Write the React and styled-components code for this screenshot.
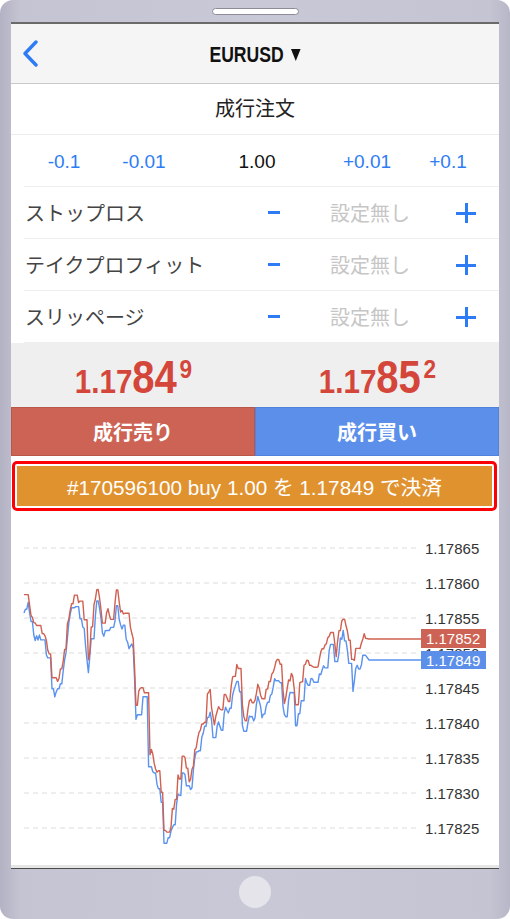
import React from "react";
import styled, { createGlobalStyle } from "styled-components";

const BLUE = "#2d7cf6";
const JP = `"Liberation Sans", "Noto Sans CJK JP", sans-serif`;

const GlobalStyle = createGlobalStyle`
  *, *::before, *::after { box-sizing: border-box; }
  html, body { margin: 0; padding: 0; background: #ffffff; }
  body { font-family: ${JP}; }
`;

// device frame
const Device = styled.div`
  width: 510px;
  height: 919px;
  border-radius: 13px;
  padding: 0 11px;
  display: flex;
  flex-direction: column;
  overflow: hidden;
  background: linear-gradient(
    to right,
    #b3b2c4 0%,
    #c5c4d2 4%,
    #c9c8d6 50%,
    #c5c4d2 96%,
    #b8b7c8 100%
  );
`;

const TopBezel = styled.div`
  height: 22px;
  display: flex;
  justify-content: center;
`;

const Speaker = styled.div`
  margin-top: 8px;
  width: 87px;
  height: 7px;
  border-radius: 4px;
  background: #ffffff;
  border: 1px solid #8d8c98;
`;

const Screen = styled.div`
  height: 847px;
  display: flex;
  flex-direction: column;
  background: #ffffff;
  border-top: 2px solid #6a6a6a;
  border-bottom: 1px solid #4d4d4d;
`;

const BottomBezel = styled.div`
  flex: 1;
  display: flex;
  justify-content: center;
  padding-top: 7px;
`;

const HomeButton = styled.div`
  width: 32px;
  height: 32px;
  border-radius: 50%;
  background: #e4e4ea;
`;

// nav
const NavBar = styled.div`
  height: 60px;
  display: grid;
  grid-template-columns: 60px 1fr 60px;
  align-items: center;
  background: #f5f5f5;
  border-bottom: 1px solid #c9c9c9;
`;

const BackButton = styled.div`
  padding-left: 11px;
  display: flex;
`;

const TitleGroup = styled.div`
  justify-self: center;
  display: flex;
  align-items: center;
  padding-top: 3px;
  transform: scaleX(0.8);
  font: 700 22px "Liberation Sans", sans-serif;
  color: #111;
`;

const Caret = styled.span`
  margin-left: 9px;
  width: 0;
  height: 0;
  border-left: 6px solid transparent;
  border-right: 6px solid transparent;
  border-top: 12px solid #111;
`;

const SectionTitle = styled.div`
  height: 51px;
  display: flex;
  align-items: center;
  justify-content: center;
  padding-bottom: 3px;
  font-size: 20px;
  color: #222;
  border-bottom: 1px solid #ececec;
`;

const LotRow = styled.div`
  height: 52px;
  margin-left: 13px;
  padding-top: 3px;
  display: grid;
  grid-template-columns: 80px 80px 146px 74px 88px;
  align-items: center;
  justify-items: center;
  border-bottom: 1px solid #efefef;
  font-size: 19px;
`;

const LotStep = styled.span`
  color: ${(p) => (p.$value ? "#111" : BLUE)};
`;

const SettingRow = styled.div`
  height: 52px;
  margin-left: 13px;
  display: grid;
  grid-template-columns: 227px 46px 146px 46px 1fr;
  align-items: center;
  justify-items: center;
  border-bottom: 1px solid #efefef;
  &:last-child {
    border-bottom: none;
  }
`;

const SettingLabel = styled.span`
  justify-self: start;
  padding-left: 1px;
  font-size: 20px;
  color: #444;
`;

const SettingValue = styled.span`
  font-size: 20px;
  color: #c6c6c6;
`;

const Minus = styled.span`
  width: 12px;
  height: 3px;
  background: ${BLUE};
`;

const Plus = styled.span`
  position: relative;
  width: 20px;
  height: 20px;
  &::before,
  &::after {
    content: "";
    position: absolute;
    background: ${BLUE};
  }
  &::before {
    left: 0;
    right: 0;
    top: 9px;
    height: 3px;
  }
  &::after {
    top: 0;
    bottom: 0;
    left: 9px;
    width: 3px;
  }
`;

// prices
const PriceBar = styled.div`
  height: 64px;
  display: grid;
  grid-template-columns: 1fr 1fr;
  align-items: center;
  justify-items: center;
  background: #efefef;
  padding-top: 4px;
`;

const Price = styled.div`
  display: inline-flex;
  align-items: baseline;
  transform: scaleX(0.87);
  font-family: "Liberation Sans", sans-serif;
  font-weight: 700;
  line-height: 1;
  color: #d5463a;
`;

const PriceHead = styled.span`
  font-size: 34px;
`;

const PriceBig = styled.span`
  font-size: 46px;
`;

const PriceSup = styled.span`
  align-self: flex-start;
  margin-top: 2px;
  margin-left: 3px;
  font-size: 26px;
`;

const TradeRow = styled.div`
  height: 49px;
  display: grid;
  grid-template-columns: 1fr 1fr;
`;

const TradeButton = styled.div`
  display: flex;
  align-items: center;
  justify-content: center;
  font-size: 20px;
  font-weight: 700;
  color: #fff;
  background: ${(p) => (p.$side === "sell" ? "#cd6354" : "#5b8fea")};
  border: 1px solid ${(p) => (p.$side === "sell" ? "#b95749" : "#4f83dc")};
`;

const CloseWrap = styled.div`
  height: 59px;
  padding: 5px 2px 4px 1px;
`;

const CloseFrame = styled.div`
  height: 50px;
  padding: 2px;
  border: 3px solid #fb0007;
  border-radius: 5px;
  background: #fff;
`;

const CloseButton = styled.div`
  height: 40px;
  display: flex;
  align-items: center;
  justify-content: center;
  background: #e0922f;
  color: #fff;
  font-size: 20.7px;
`;

const ChartBox = styled.div`
  flex: 1;
  background: #fff;
`;

const ChartFoot = styled.div`
  height: 3px;
  background: #e6e6e6;
`;

// chart data (absolute page coords of the bid line, traced from the screen)
const BID_KEYS = [
  [24, 610], [28, 602], [32, 633], [36, 640], [40, 635], [44, 650], [48, 660],
  [54, 703], [58, 690], [62, 680], [66, 650], [70, 612], [75, 608], [80, 618],
  [84, 628], [88, 675], [92, 632], [97, 603], [100, 610], [103, 640], [108, 625],
  [113, 635], [117, 603], [120, 625], [125, 630], [128, 645], [133, 645],
  [136, 717], [140, 705], [143, 700], [148, 767], [152, 767], [157, 787],
  [160, 787], [165, 855], [170, 833], [175, 820], [178, 793], [181, 793],
  [183, 757], [186, 780], [189, 802], [192, 785], [196, 752], [200, 752],
  [205, 720], [210, 707], [214, 743], [218, 725], [222, 730], [225, 703],
  [229, 717], [233, 693], [236, 682], [240, 693], [243, 730], [246, 745],
  [249, 717], [255, 717], [258, 697], [262, 717], [266, 710], [270, 700],
  [275, 680], [280, 680], [285, 723], [289, 697], [293, 693], [296, 730],
  [300, 703], [305, 682], [312, 682], [318, 682], [322, 667], [326, 663],
  [330, 650], [333, 640], [336, 673], [340, 643], [343, 633], [347, 650],
  [350, 667], [353, 690], [356, 667], [360, 667], [363, 655], [366, 658],
];

const OX = 11;
const OY = 515;

function keyAt(x) {
  for (let i = 1; i < BID_KEYS.length; i++) {
    const [x1, y1] = BID_KEYS[i];
    if (x <= x1) {
      const [x0, y0] = BID_KEYS[i - 1];
      return y0 + ((y1 - y0) * (x - x0)) / (x1 - x0);
    }
  }
  return BID_KEYS[BID_KEYS.length - 1][1];
}

function makeRandom(seed) {
  let s = seed;
  return () => {
    s = (s * 16807) % 2147483647;
    return (s - 1) / 2147483646;
  };
}

function buildLines() {
  const rand = makeRandom(20170919);
  const bid = [];
  const ask = [];
  let lastB = null;
  let lastA = null;
  for (let x = 24; x <= 366; x += 1.4) {
    const base = keyAt(x);
    let b = base + (rand() - 0.5) * 8;
    if (lastB !== null && rand() < 0.3) b = lastB;
    const spread = 12 + (7 * (x - 24)) / 342;
    let a = base - spread + (rand() - 0.5) * 8;
    if (lastA !== null && rand() < 0.3) a = lastA;
    if (a > b - 4) a = b - 4;
    bid.push([x, b]);
    ask.push([x, a]);
    lastB = b;
    lastA = a;
  }
  bid.push([369, 660], [421, 660]);
  ask.push([369, 639], [421, 639]);
  const toPath = (pts) =>
    pts.map(([x, y]) => `${(x - OX).toFixed(1)},${(y - OY).toFixed(1)}`).join(" ");
  return { bid: toPath(bid), ask: toPath(ask) };
}

const LEVELS = ["1.17865", "1.17860", "1.17855", "1.17850", "1.17845", "1.17840", "1.17835", "1.17830", "1.17825"];

function PriceChart() {
  const lines = React.useMemo(buildLines, []);
  return (
    <svg width="488" height="350" style={{ display: "block" }}>
      {LEVELS.map((label, i) => {
        const y = 33 + i * 35;
        return (
          <g key={label}>
            <line x1="13" x2="407" y1={y} y2={y} stroke="#dcdcdc" strokeWidth="1" strokeDasharray="5 4" />
            <text x="414" y={y} dy="5.5" fontSize="15" fill="#333" fontFamily="Liberation Sans, sans-serif">
              {label}
            </text>
          </g>
        );
      })}
      <polyline points={lines.bid} fill="none" stroke="#5a92ef" strokeWidth="1.4" strokeLinejoin="round" />
      <polyline points={lines.ask} fill="none" stroke="#d0604f" strokeWidth="1.4" strokeLinejoin="round" />
      <rect x="410" y="114" width="65" height="19" fill="#cd6354" />
      <text x="415" y="123.5" dy="5.5" fontSize="15" fill="#fff" fontFamily="Liberation Sans, sans-serif">
        1.17852
      </text>
      <rect x="410" y="136" width="65" height="18" fill="#5b8fea" />
      <text x="415" y="145" dy="5.5" fontSize="15" fill="#fff" fontFamily="Liberation Sans, sans-serif">
        1.17849
      </text>
    </svg>
  );
}

const SETTINGS = ["ストップロス", "テイクプロフィット", "スリッページ"];

export default function App() {
  return (
    <>
      <GlobalStyle />
      <Device>
        <TopBezel>
          <Speaker />
        </TopBezel>
        <Screen>
          <NavBar>
            <BackButton>
              <svg width="17" height="27" viewBox="0 0 17 27">
                <polyline points="14,2 3,13.5 14,25" fill="none" stroke={BLUE} strokeWidth="3.4" strokeLinecap="round" strokeLinejoin="round" />
              </svg>
            </BackButton>
            <TitleGroup>
              EURUSD
              <Caret />
            </TitleGroup>
            <span />
          </NavBar>
          <SectionTitle>成行注文</SectionTitle>
          <LotRow>
            <LotStep>-0.1</LotStep>
            <LotStep>-0.01</LotStep>
            <LotStep $value>1.00</LotStep>
            <LotStep>+0.01</LotStep>
            <LotStep>+0.1</LotStep>
          </LotRow>
          {SETTINGS.map((label) => (
            <SettingRow key={label}>
              <SettingLabel>{label}</SettingLabel>
              <Minus />
              <SettingValue>設定無し</SettingValue>
              <Plus />
            </SettingRow>
          ))}
          <PriceBar>
            <Price>
              <PriceHead>1.17</PriceHead>
              <PriceBig>84</PriceBig>
              <PriceSup>9</PriceSup>
            </Price>
            <Price>
              <PriceHead>1.17</PriceHead>
              <PriceBig>85</PriceBig>
              <PriceSup>2</PriceSup>
            </Price>
          </PriceBar>
          <TradeRow>
            <TradeButton $side="sell">成行売り</TradeButton>
            <TradeButton $side="buy">成行買い</TradeButton>
          </TradeRow>
          <CloseWrap>
            <CloseFrame>
              <CloseButton>#170596100 buy 1.00 を 1.17849 で決済</CloseButton>
            </CloseFrame>
          </CloseWrap>
          <ChartBox>
            <PriceChart />
          </ChartBox>
          <ChartFoot />
        </Screen>
        <BottomBezel>
          <HomeButton />
        </BottomBezel>
      </Device>
    </>
  );
}
